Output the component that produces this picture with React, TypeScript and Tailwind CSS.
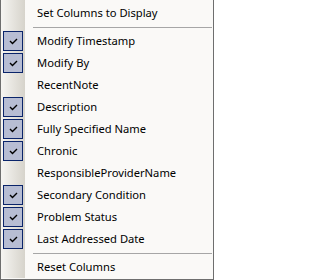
import React from "react";

type Item = { label: string; checked?: boolean };

const columns: Item[] = [
  { label: "Modify Timestamp", checked: true },
  { label: "Modify By", checked: true },
  { label: "RecentNote" },
  { label: "Description", checked: true },
  { label: "Fully Specified Name", checked: true },
  { label: "Chronic", checked: true },
  { label: "ResponsibleProviderName" },
  { label: "Secondary Condition", checked: true },
  { label: "Problem Status", checked: true },
  { label: "Last Addressed Date", checked: true },
];

const CheckBox = () => (
  <div className="flex h-[20px] w-[20px] items-center justify-center border border-[#0a246a] bg-[#b7bdd3]">
    <svg width="9" height="7" viewBox="0 0 9 7" fill="none">
      <path d="M1 3 L3.5 5.5 L8 1" stroke="#000" strokeWidth="1.4" />
    </svg>
  </div>
);

const Row = ({ item }: { item: Item }) => (
  <div className="flex h-[22px] items-center">
    <div className="flex w-[26px] shrink-0 items-center pl-[2px]">
      {item.checked && <CheckBox />}
    </div>
    <span className="pb-px pl-[10px] text-[11.2px] leading-none text-black">{item.label}</span>
  </div>
);

const Separator = () => (
  <div className="flex h-[6px] items-center pl-[32px] pr-[1px]">
    <div className="h-px w-full bg-[#a6a6a6]" />
  </div>
);

export default function App() {
  return (
    <div
      className="relative h-[280px] w-[214px] overflow-hidden border-x border-b border-[#6e6e6e] bg-[#faf9f7]"
      style={{ fontFamily: '"Noto Sans", Tahoma, sans-serif' }}
    >
      <div className="absolute bottom-[1px] left-0 top-0 w-[24px] bg-gradient-to-r from-[#f6f5f2] to-[#d6d3cb]" />
      <div className="relative flex flex-col pt-[2px]">
        <Row item={{ label: "Set Columns to Display" }} />
        <Separator />
        {columns.map((c) => (
          <Row key={c.label} item={c} />
        ))}
        <Separator />
        <Row item={{ label: "Reset Columns" }} />
      </div>
    </div>
  );
}
